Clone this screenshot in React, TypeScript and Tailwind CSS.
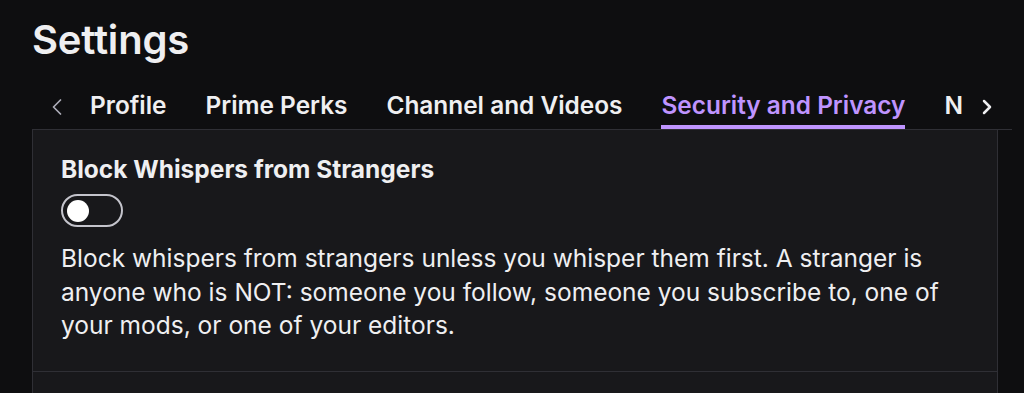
import React from "react";
import { ChevronLeft, ChevronRight } from "lucide-react";

const tabs = ["Profile", "Prime Perks", "Channel and Videos", "Security and Privacy", "Notifications", "Connections"];
const active = "Security and Privacy";

export default function App() {
  return (
    <div className="h-[393px] overflow-hidden bg-[#0e0e10] text-[#efeff1] font-['Inter',sans-serif]">
      <div className="pl-8">
        <h1 className="pt-[16px] text-[40px] leading-[48px] font-semibold tracking-[-0.2px]">Settings</h1>

        <div className="mt-[18px] flex h-[48px] w-[980px] items-stretch border-b border-[#2f2f35]">
          <button className="flex w-[50px] items-center justify-center pt-[2px] text-[#adadb8]">
            <ChevronLeft className="h-7 w-7" strokeWidth={1.5} />
          </button>
          <div className="flex flex-1 gap-[39px] overflow-hidden pl-[8px]">
            {tabs.map((tab) => (
              <div key={tab} className="flex shrink-0 flex-col justify-between">
                <span
                  className={
                    "pt-[8px] text-[24.4px] leading-[30px] font-semibold whitespace-nowrap " +
                    (tab === active ? "text-[#bf94ff]" : "text-[#efeff1]")
                  }
                >
                  {tab}
                </span>
                <div className={"h-[4px] " + (tab === active ? "bg-[#bf94ff]" : "bg-transparent")} />
              </div>
            ))}
          </div>
          <button className="flex w-[50px] items-center justify-center pt-[2px] text-[#efeff1]">
            <ChevronRight className="h-6 w-6" strokeWidth={2.5} />
          </button>
        </div>

        <div className="w-[966px] border-x border-[#2f2f35] bg-[#18181b]">
          <div className="border-b border-[#2f2f35] px-7 pt-[24px] pb-[28px]">
            <h2 className="text-[24.5px] leading-[30px] font-bold">Block Whispers from Strangers</h2>
            <div className="mt-[10px] flex h-[33px] w-[62px] items-center rounded-full border-2 border-[#c4c4cc] px-[4px]">
              <div className="h-[22px] w-[22px] rounded-full bg-white" />
            </div>
            <p className="mt-[15px] max-w-[910px] text-[24.5px] leading-[33.5px]">
              Block whispers from strangers unless you whisper them first. A stranger is anyone who is NOT: someone you
              follow, someone you subscribe to, one of your mods, or one of your editors.
            </p>
          </div>
          <div className="h-[60px]" />
        </div>
      </div>
    </div>
  );
}
